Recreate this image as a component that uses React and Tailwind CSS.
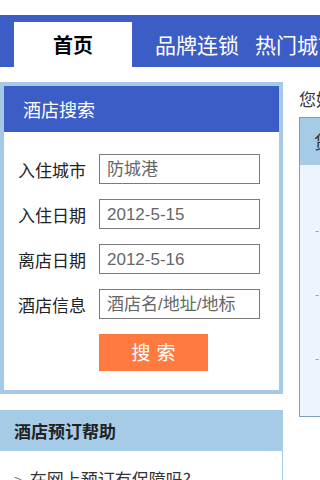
import React from 'react';

const CJK = { fontFamily: '"Noto Sans CJK SC", "Noto Sans", sans-serif' };
const ARIAL = { fontFamily: '"Liberation Sans", "Noto Sans CJK SC", sans-serif' };

const fields = [
  { label: '入住城市', value: '防城港' },
  { label: '入住日期', value: '2012-5-15' },
  { label: '离店日期', value: '2012-5-16' },
  { label: '酒店信息', value: '酒店名/地址/地标' },
];

const FormRow = ({ label, value }) => (
  <div className="flex items-center h-[30px]">
    <span className="w-[95px] shrink-0 whitespace-nowrap pl-[14px] text-[17px] text-[#222] leading-none">{label}</span>
    <div
      className="w-[161px] h-[30px] shrink-0 border border-[#7b7b7b] bg-white flex items-center pl-[7px] text-[17px] text-[#666] leading-none whitespace-nowrap overflow-hidden"
      style={ARIAL}
    >
      {value}
    </div>
  </div>
);

export default function App() {
  return (
    <div className="w-[320px] h-[480px] overflow-hidden bg-white" style={CJK}>
      <div className="w-[640px]">
        {/* nav */}
        <div className="mt-[15px] h-[52px] bg-[#3c5cc6] flex items-end pl-[14px]">
          <div className="w-[118px] h-[45px] bg-white flex items-center justify-center text-[20px] font-bold text-black">
            首页
          </div>
          <div className="h-[45px] flex items-center pl-[23px] pr-[16px] text-[21px] text-white">品牌连锁</div>
          <div className="h-[45px] flex items-center text-[21px] text-white">热门城市</div>
        </div>

        <div className="flex mt-[15px]">
          {/* left column */}
          <div className="w-[283px] shrink-0">
            <div className="border-[4px] border-[#a6c9e6]">
              <div className="h-[46px] bg-[#3c5cc6] flex items-center pl-[19px] text-[18px] text-white">
                酒店搜索
              </div>
              <div className="bg-white flex flex-col gap-[15px] pt-[22px] pb-[19px]">
                {fields.map(f => <FormRow key={f.label} {...f} />)}
                <div className="pl-[95px]">
                  <div className="w-[109px] h-[37px] bg-[#ff7a3f] flex items-center justify-center text-white text-[19px] tracking-[6px] pl-[6px]">
                    搜索
                  </div>
                </div>
              </div>
            </div>

            <div className="mt-[16px]">
              <div className="h-[41px] bg-[#a6cbe6] flex items-center pl-[14px] text-[17px] font-bold text-[#222]">
                酒店预订帮助
              </div>
              <div className="border-r border-[#a6cbe6] h-[60px] pt-[16px] pl-[14px] flex items-start gap-[8px] text-[17px] text-[#333] leading-[24px] whitespace-nowrap">
                <span className="text-[#777] text-[14px]">&gt;</span>
                <span>在网上预订有保障吗?</span>
              </div>
            </div>
          </div>

          {/* right column */}
          <div className="ml-[16px] w-[300px] shrink-0">
            <div className="pt-[8px] h-[35px] text-[17px] text-[#333] leading-none whitespace-nowrap">您好，欢迎光临</div>
            <div className="border border-[#7f9fb8] h-[300px] bg-[#eef4fd]">
              <div className="h-[47px] bg-[#a6cbe6] flex items-center pl-[14px] text-[18px] text-[#333]">贷款</div>
              <div className="flex flex-col pl-[15px] pt-[58px] gap-[50px] text-[#999] text-[12px] leading-[14px]">
                <span>-</span>
                <span>-</span>
                <span>-</span>
              </div>
            </div>
          </div>
        </div>
      </div>
    </div>
  );
}
